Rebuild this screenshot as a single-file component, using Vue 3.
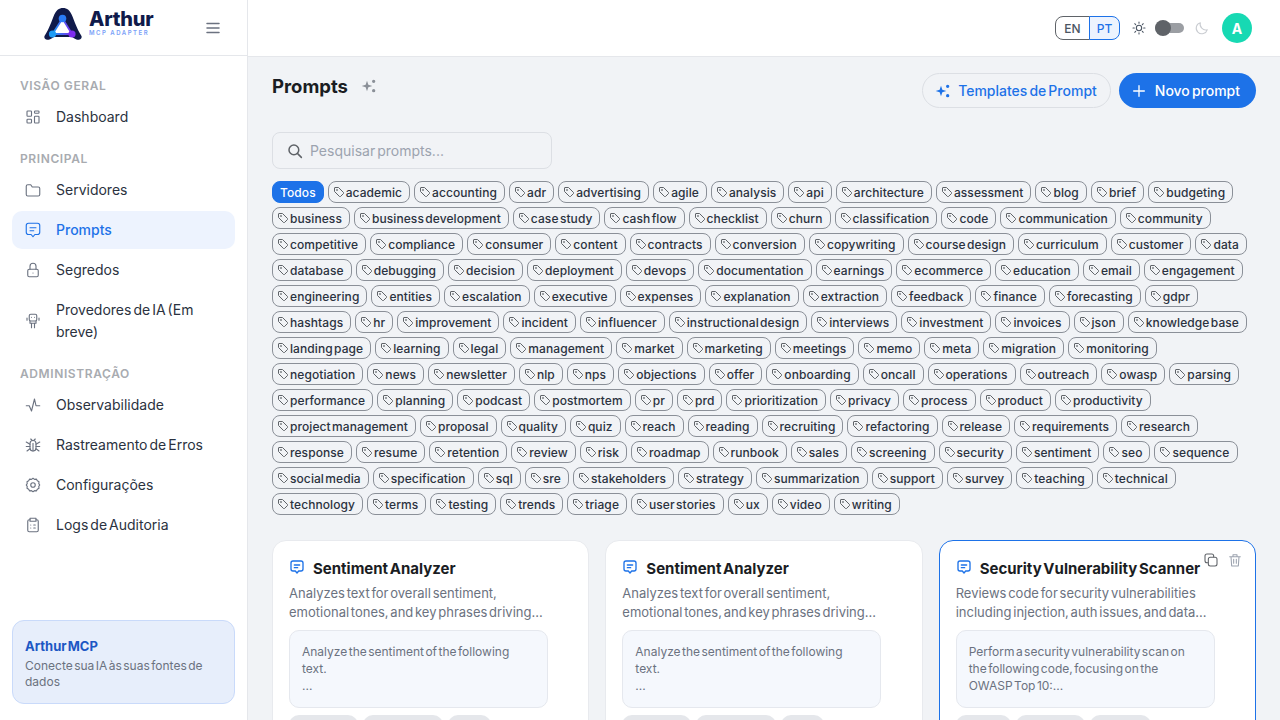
<template>
  <div class="app">
    <aside class="sidebar">
      <div class="brand">
        <div class="logo">
          <svg width="40" height="34" viewBox="0 0 40 34">
            <defs>
              <linearGradient id="tri" x1="0" y1="0" x2="1" y2="0">
                <stop offset="0" stop-color="#1d9bf5" />
                <stop offset="1" stop-color="#7c2cf0" />
              </linearGradient>
            </defs>
            <path d="M1.500 29 C4 25 6 21 8 16 L10.500 9.500 C13 3 16 1 20 1 C24 1 27 3 29.500 9.500 L32 16 C34 21 36 25 38.500 29 C39.500 32 36 33.500 33.500 32.500 C31 31.500 30 30 28.500 30 L11.500 30 C10 30 9 31.500 6.500 32.500 C4 33.500 .5 32 1.500 29 Z" fill="#101a4a" />
            <path d="M19.500 11.500 L9.500 27 L29 27 Z" fill="#fff" stroke="url(#tri)" stroke-width="1.800" stroke-linejoin="round" />
            <circle cx="19.500" cy="11.500" r="3.800" fill="#2a7bf6" />
            <circle cx="9.500" cy="27" r="3.600" fill="#1d9bf5" />
            <circle cx="29" cy="27" r="3.600" fill="#7c2cf0" />
          </svg>
          <div class="logo-text">
            <span class="logo-name">Arthur</span>
            <span class="logo-sub">MCP ADAPTER</span>
          </div>
        </div>
        <svg width="18" height="18" viewBox="0 0 24 24" fill="none" stroke="#6b7280" stroke-width="2" stroke-linecap="round">
          <path d="M4 6h16M4 12h16M4 18h16" />
        </svg>
      </div>

      <nav class="nav">
        <template v-for="group in navGroups" :key="group.title">
          <div class="nav-title">{{ group.title }}</div>
          <a v-for="item in group.items" :key="item.label" class="nav-item" :class="{ 'nav-item--active': item.active }">
            <svg class="nav-icon" width="18" height="18" viewBox="0 0 24 24" fill="none" stroke="currentColor" stroke-width="1.5" stroke-linecap="round" stroke-linejoin="round">
              <path v-for="d in icons[item.icon]" :key="d" :d="d" />
            </svg>
            <span>{{ item.label }}</span>
          </a>
        </template>
      </nav>

      <div class="promo">
        <div class="promo-title">Arthur MCP</div>
        <div class="promo-text">Conecte sua IA às suas fontes de dados</div>
      </div>
    </aside>

    <div class="content">
      <header class="topbar">
        <div class="lang">
          <span class="lang-opt">EN</span>
          <span class="lang-opt lang-opt--on">PT</span>
        </div>
        <svg class="sun" width="16" height="16" viewBox="0 0 24 24" fill="none" stroke="#4b5563" stroke-width="1.6" stroke-linecap="round">
          <circle cx="12" cy="12" r="4" />
          <path d="M12 3v2M12 19v2M3 12h2M19 12h2M5.600 5.600l1.400 1.400M17 17l1.400 1.400M5.600 18.400L7 17M17 7l1.400-1.400" />
        </svg>
        <span class="switch"><span class="switch-knob"></span></span>
        <svg width="16" height="16" viewBox="0 0 24 24" fill="none" stroke="#c9ccd1" stroke-width="1.6" stroke-linecap="round" stroke-linejoin="round">
          <path d="M20 14.500A8.500 8.500 0 0 1 9.500 4a8.500 8.500 0 1 0 10.500 10.500z" />
        </svg>
        <span class="avatar">A</span>
      </header>

      <main class="main">
        <div class="page-head">
          <div class="page-title-row">
            <h1 class="page-title">Prompts</h1>
            <svg width="16" height="16" viewBox="0 0 24 24" fill="#8b9098">
              <path :d="sparkle" />
            </svg>
          </div>
          <div class="page-actions">
            <button class="btn btn--ghost">
              <svg width="16" height="16" viewBox="0 0 24 24" fill="#1d72e8"><path :d="sparkle" /></svg>
              Templates de Prompt
            </button>
            <button class="btn btn--primary">
              <svg width="16" height="16" viewBox="0 0 24 24" fill="none" stroke="#fff" stroke-width="2" stroke-linecap="round"><path d="M12 4v16M4 12h16" /></svg>
              Novo prompt
            </button>
          </div>
        </div>

        <div class="search">
          <svg width="18" height="18" viewBox="0 0 24 24" fill="none" stroke="#5f6368" stroke-width="2" stroke-linecap="round">
            <circle cx="10.500" cy="10.500" r="6.500" />
            <path d="M15.500 15.500l5 5" />
          </svg>
          <span>Pesquisar prompts...</span>
        </div>

        <div class="tags">
          <div v-for="(row, r) in tagRows" :key="r" class="tag-row">
            <span v-if="r === 0" class="tag tag--all">Todos</span>
            <span v-for="t in row" :key="t" class="tag">
              <svg width="12" height="12" viewBox="0 0 24 24" fill="none" stroke="#5f6368" stroke-width="2" stroke-linejoin="round">
                <path :d="tagPath" />
                <circle cx="8" cy="8" r="1" />
              </svg>
              {{ t }}
            </span>
          </div>
        </div>

        <div class="cards">
          <article v-for="(c, i) in cards" :key="i" class="card" :class="{ 'card--hover': c.hover }">
            <div v-if="c.hover" class="card-actions">
              <svg width="16" height="16" viewBox="0 0 24 24" fill="none" stroke="#5f6368" stroke-width="1.600" stroke-linejoin="round">
                <rect x="8" y="8" width="13" height="13" rx="3" />
                <path d="M16 8V6a3 3 0 0 0-3-3H6a3 3 0 0 0-3 3v7a3 3 0 0 0 3 3h2" />
              </svg>
              <svg width="16" height="16" viewBox="0 0 24 24" fill="none" stroke="#9ca3af" stroke-width="1.600" stroke-linecap="round" stroke-linejoin="round">
                <path d="M4 7h16M9 7V4h6v3M6 7l1 14h10l1-14M10 11v6M14 11v6" />
              </svg>
            </div>
            <div class="card-head">
              <svg width="16" height="16" viewBox="0 0 24 24" fill="none" stroke="#1d72e8" stroke-width="2" stroke-linecap="round" stroke-linejoin="round">
                <path :d="msgPath" />
                <path d="M8 9h8M8 13h5" />
              </svg>
              <h3 class="card-title">{{ c.title }}</h3>
            </div>
            <p class="card-desc">{{ c.desc }}</p>
            <div class="card-body">
              <span v-for="line in c.body" :key="line">{{ line }}</span>
            </div>
            <div class="card-tags">
              <span v-for="(w, p) in c.pills" :key="p" class="pill" :style="{ width: w + 'px' }"></span>
            </div>
          </article>
        </div>
      </main>
    </div>
  </div>
</template>

<script setup>
const sparkle = 'M9 4l2 6 6 2-6 2-2 6-2-6-6-2 6-2zM19 2.500a2.500 2.500 0 1 1 0 5 2.500 2.500 0 0 1 0-5zM19 16.500a2.500 2.500 0 1 1 0 5 2.500 2.500 0 0 1 0-5z'
const tagPath = 'M3 4a1 1 0 0 1 1-1h7l10 10a1.500 1.500 0 0 1 0 2l-6 6a1.500 1.500 0 0 1-2 0L3 11z'
const msgPath = 'M6 3h12a3 3 0 0 1 3 3v9a3 3 0 0 1-3 3h-3.500L12 21l-2.500-3H6a3 3 0 0 1-3-3V6a3 3 0 0 1 3-3z'

const icons = {
  grid: ['M5 4h4a1 1 0 0 1 1 1v5a1 1 0 0 1-1 1H5a1 1 0 0 1-1-1V5a1 1 0 0 1 1-1z', 'M15 4h4a1 1 0 0 1 1 1v1a1 1 0 0 1-1 1h-4a1 1 0 0 1-1-1V5a1 1 0 0 1 1-1z', 'M15 11h4a1 1 0 0 1 1 1v7a1 1 0 0 1-1 1h-4a1 1 0 0 1-1-1v-7a1 1 0 0 1 1-1z', 'M5 15h4a1 1 0 0 1 1 1v3a1 1 0 0 1-1 1H5a1 1 0 0 1-1-1v-3a1 1 0 0 1 1-1z'],
  folder: ['M3 7a2 2 0 0 1 2-2h4l2 3h8a2 2 0 0 1 2 2v8a2 2 0 0 1-2 2H5a2 2 0 0 1-2-2z'],
  msg: [msgPath, 'M8 9h8M8 13h5'],
  lock: ['M5 13a2 2 0 0 1 2-2h10a2 2 0 0 1 2 2v6a2 2 0 0 1-2 2H7a2 2 0 0 1-2-2z', 'M8 11V7a4 4 0 0 1 8 0v4', 'M12 16h.01'],
  robot: ['M7 5a2 2 0 0 1 2-2h6a2 2 0 0 1 2 2v5a2 2 0 0 1-2 2H9a2 2 0 0 1-2-2z', 'M10 7h.01M14 7h.01', 'M4 8v3M20 8v3', 'M8 12v3h8v-3', 'M10 15v6M14 15v6'],
  pulse: ['M3 13h4l3 7 4-16 2 9h5'],
  bug: ['M8 10a4 4 0 0 1 8 0v6a4 4 0 0 1-8 0z', 'M12 10v10', 'M9 4l2 2M15 4l-2 2', 'M3 8l5 3M21 8l-5 3M3 14h5M21 14h-5M4 20l4-3M20 20l-4-3'],
  gear: ['M12 3l2 1.500 2.500-.3 1.300 2.200 2.200 1.300-.3 2.500L21 12l-1.300 1.800.3 2.500-2.200 1.300-1.300 2.200-2.500-.3L12 21l-2-1.500-2.500.3-1.300-2.200L4 16.300l.3-2.500L3 12l1.300-1.800L4 7.700l2.200-1.300L7.500 4.200l2.500.3z', 'M12 9a3 3 0 1 1 0 6 3 3 0 0 1 0-6z'],
  clip: ['M8 5H7a2 2 0 0 0-2 2v12a2 2 0 0 0 2 2h10a2 2 0 0 0 2-2V7a2 2 0 0 0-2-2h-1', 'M8 3h8v4H8z', 'M9 12h.01M13 12h2M9 16h.01M13 16h2'],
}

const navGroups = [
  { title: 'VISÃO GERAL', items: [{ label: 'Dashboard', icon: 'grid' }] },
  {
    title: 'PRINCIPAL',
    items: [
      { label: 'Servidores', icon: 'folder' },
      { label: 'Prompts', icon: 'msg', active: true },
      { label: 'Segredos', icon: 'lock' },
      { label: 'Provedores de IA (Em breve)', icon: 'robot' },
    ],
  },
  {
    title: 'ADMINISTRAÇÃO',
    items: [
      { label: 'Observabilidade', icon: 'pulse' },
      { label: 'Rastreamento de Erros', icon: 'bug' },
      { label: 'Configurações', icon: 'gear' },
      { label: 'Logs de Auditoria', icon: 'clip' },
    ],
  },
]

const tagRows = [
  ['academic', 'accounting', 'adr', 'advertising', 'agile', 'analysis', 'api', 'architecture', 'assessment', 'blog', 'brief', 'budgeting'],
  ['business', 'business development', 'case study', 'cash flow', 'checklist', 'churn', 'classification', 'code', 'communication', 'community'],
  ['competitive', 'compliance', 'consumer', 'content', 'contracts', 'conversion', 'copywriting', 'course design', 'curriculum', 'customer', 'data'],
  ['database', 'debugging', 'decision', 'deployment', 'devops', 'documentation', 'earnings', 'ecommerce', 'education', 'email', 'engagement'],
  ['engineering', 'entities', 'escalation', 'executive', 'expenses', 'explanation', 'extraction', 'feedback', 'finance', 'forecasting', 'gdpr'],
  ['hashtags', 'hr', 'improvement', 'incident', 'influencer', 'instructional design', 'interviews', 'investment', 'invoices', 'json', 'knowledge base'],
  ['landing page', 'learning', 'legal', 'management', 'market', 'marketing', 'meetings', 'memo', 'meta', 'migration', 'monitoring'],
  ['negotiation', 'news', 'newsletter', 'nlp', 'nps', 'objections', 'offer', 'onboarding', 'oncall', 'operations', 'outreach', 'owasp', 'parsing'],
  ['performance', 'planning', 'podcast', 'postmortem', 'pr', 'prd', 'prioritization', 'privacy', 'process', 'product', 'productivity'],
  ['project management', 'proposal', 'quality', 'quiz', 'reach', 'reading', 'recruiting', 'refactoring', 'release', 'requirements', 'research'],
  ['response', 'resume', 'retention', 'review', 'risk', 'roadmap', 'runbook', 'sales', 'screening', 'security', 'sentiment', 'seo', 'sequence'],
  ['social media', 'specification', 'sql', 'sre', 'stakeholders', 'strategy', 'summarization', 'support', 'survey', 'teaching', 'technical'],
  ['technology', 'terms', 'testing', 'trends', 'triage', 'user stories', 'ux', 'video', 'writing'],
]

const sentiment = {
  title: 'Sentiment Analyzer',
  desc: 'Analyzes text for overall sentiment, emotional tones, and key phrases driving...',
  body: ['Analyze the sentiment of the following text.', '...'],
  pills: [69, 80, 43],
}

const cards = [
  sentiment,
  sentiment,
  {
    title: 'Security Vulnerability Scanner',
    desc: 'Reviews code for security vulnerabilities including injection, auth issues, and data...',
    body: ['Perform a security vulnerability scan on the following code, focusing on the OWASP Top 10:...'],
    pills: [55, 69, 61],
    hover: true,
  },
]
</script>

<style scoped>
* { box-sizing: border-box; }
.app { display: flex; height: 720px; overflow: hidden; font-family: Inter, "Noto Sans", sans-serif; word-spacing: -0.12em; color: #1f2937; background: #f1f3f6; }

.sidebar { width: 248px; flex-shrink: 0; display: flex; flex-direction: column; background: #fff; border-right: 1px solid #e5e7eb; }
.brand { height: 56px; flex-shrink: 0; display: flex; align-items: center; padding-left: 43px; border-bottom: 1px solid #e5e7eb; }
.logo { display: flex; align-items: center; gap: 6px; width: 161px; margin-top: -8px; }
.logo-text { display: flex; flex-direction: column; margin-top: -2px; }
.logo-name { font-size: 20px; font-weight: 800; line-height: 20px; color: #101a4a; letter-spacing: -0.2px; }
.logo-sub { font-size: 6px; font-weight: 600; line-height: 7px; letter-spacing: 1.5px; word-spacing: 0; color: #7a9ff8; }

.nav { flex: 1; padding: 22px 12px 0; display: flex; flex-direction: column; }
.nav-title { height: 16px; padding-left: 8px; margin-bottom: 4px; font-size: 12px; font-weight: 600; letter-spacing: 0.6px; line-height: 16px; word-spacing: 0; color: #a8abb0; }
.nav-title:not(:first-child) { margin-top: 13px; }
.nav-item { display: flex; align-items: center; gap: 14px; padding: 8px 12px; margin-bottom: 2px; border-radius: 10px; font-size: 14px; line-height: 22px; color: #2b3240; }
.nav-icon { flex-shrink: 0; color: #6b7280; }
.nav-item--active { background: #edf3fe; color: #1d72e8; font-weight: 500; }
.nav-item--active .nav-icon { color: #1d72e8; }

.promo { margin: 0 12px 16px; height: 84px; flex-shrink: 0; padding: 16px 12px; background: #e7eefb; border: 1px solid #c9dafa; border-radius: 12px; }
.promo-title { font-size: 13px; font-weight: 700; line-height: 18px; color: #1c57c4; }
.promo-text { margin-top: 3px; font-size: 12px; line-height: 16px; color: #6b7280; }

.content { flex: 1; min-width: 0; display: flex; flex-direction: column; }
.topbar { height: 57px; flex-shrink: 0; display: flex; align-items: center; justify-content: flex-end; gap: 12px; padding-right: 28px; background: #fff; border-bottom: 1px solid #e5e7eb; }
.lang { display: flex; height: 24px; margin-right: -1px; font-size: 12px; font-weight: 500; }
.lang-opt { width: 35px; display: flex; align-items: center; justify-content: center; border: 1px solid #5f6368; border-radius: 8px 0 0 8px; color: #4b5563; }
.lang-opt--on { width: 31px; margin-left: -1px; border-color: #1d72e8; border-radius: 0 8px 8px 0; background: #edf3fe; color: #1d72e8; }
.sun { margin-right: -4px; }
.switch { position: relative; width: 29px; height: 10px; margin-right: -2px; background: #9b9ea3; border-radius: 5px; }
.switch-knob { position: absolute; left: 0; top: -3px; width: 16px; height: 16px; border-radius: 50%; background: #5f6368; }
.avatar { width: 30px; height: 30px; border-radius: 50%; display: flex; align-items: center; justify-content: center; background: #17d9b3; color: #fff; font-size: 14px; font-weight: 700; }

.main { flex: 1; padding: 16px 24px 0; overflow: hidden; }
.page-head { display: flex; justify-content: space-between; align-items: flex-start; height: 59px; }
.page-title-row { display: flex; align-items: center; gap: 13px; height: 28px; margin-top: -1px; }
.page-title { margin: 0; font-size: 18.500px; font-weight: 700; line-height: 28px; color: #1a1d23; }
.page-actions { display: flex; gap: 8px; }
.btn { height: 35px; display: flex; align-items: center; gap: 8px; border-radius: 18px; font: 500 14px Inter, sans-serif; word-spacing: -0.12em; }
.btn--ghost { gap: 7px; padding: 0 13px 0 12px; background: transparent; border: 1px solid #dcdfe4; color: #1d72e8; }
.btn--primary { padding: 0 16px 0 12px; background: #1d72e8; border: none; color: #fff; }

.search { width: 280px; height: 37px; display: flex; align-items: center; gap: 6px; padding: 0 13px; border: 1px solid #dcdfe4; border-radius: 8px; font-size: 14px; color: #9ca3af; }

.tags { display: flex; flex-direction: column; gap: 4px; margin-top: 12px; }
.tag-row { display: flex; gap: 4px; }
.tag { height: 22px; display: inline-flex; align-items: center; gap: 1px; padding: 0 7px 0 4px; border: 1px solid #8b9098; border-radius: 8px; font-size: 12px; font-weight: 500; letter-spacing: 0.08px; color: #2b3240; white-space: nowrap; }
.tag--all { padding: 0 7px; background: #1d72e8; border-color: #1d72e8; color: #fff; }

.cards { display: grid; grid-template-columns: repeat(3, 1fr); gap: 16px; margin-top: 25px; }
.card { position: relative; height: 240px; padding: 16px; background: #fff; border: 1px solid #e8eaee; border-radius: 14px; }
.card--hover { border-color: #1d72e8; }
.card-actions { position: absolute; top: 11px; right: 12px; display: flex; gap: 8px; }
.card-head { display: flex; align-items: center; gap: 8px; height: 24px; }
.card-head svg { flex-shrink: 0; margin-top: -4px; }
.card-title { margin: 0; font-size: 15px; font-weight: 700; line-height: 24px; color: #1a1d23; white-space: nowrap; }
.card-desc { margin: 3px 0 0; width: 262px; font-size: 13px; line-height: 19px; color: #6b7280; }
.card-body { width: 259px; height: 78px; margin-top: 8px; padding: 12px 16px 12px 12px; display: flex; flex-direction: column; background: #f5f8fd; border: 1px solid #e5e8ee; border-radius: 10px; font-size: 12px; line-height: 17px; color: #6b7280; }
.card-tags { display: flex; gap: 5px; margin-top: 7px; }
.pill { height: 20px; border-radius: 10px; background: #e5e7eb; }
</style>
